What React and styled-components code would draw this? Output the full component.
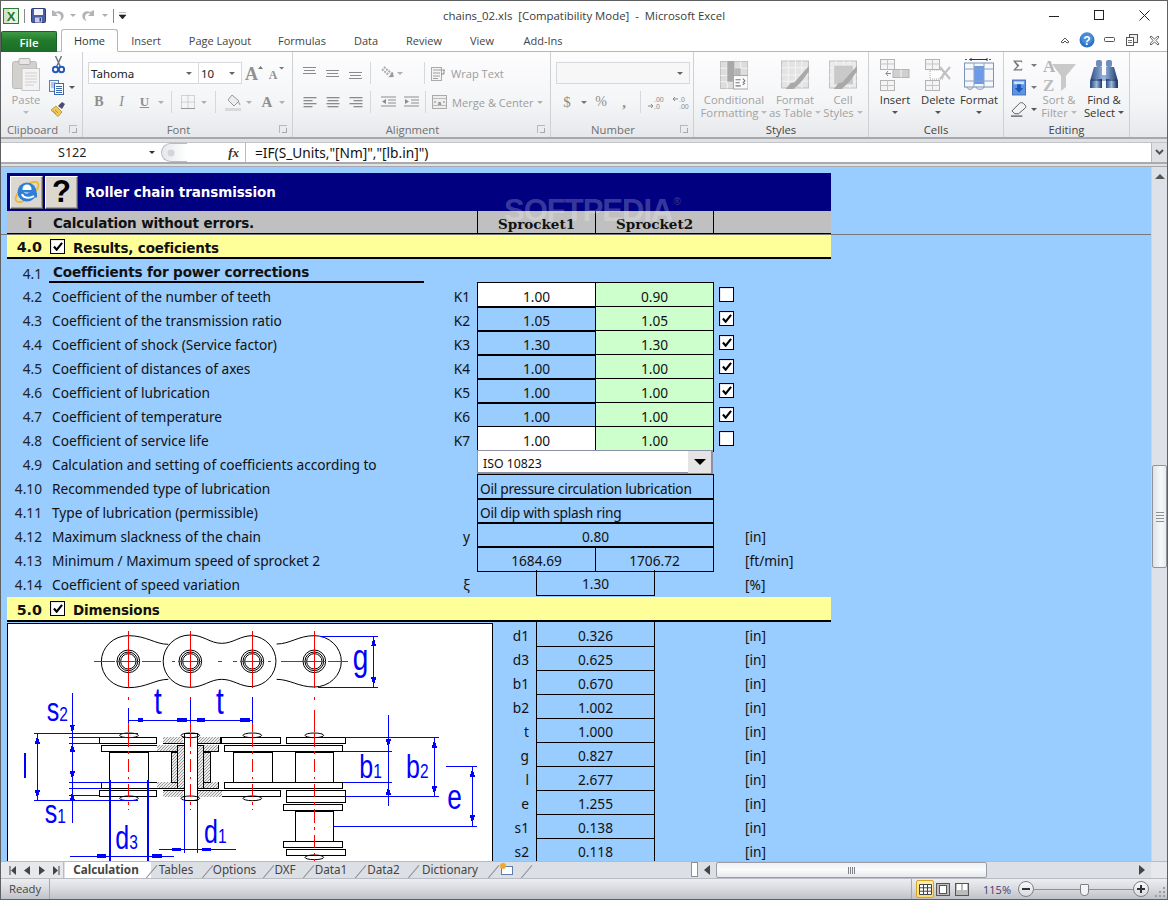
import React from "react";
import styled, { createGlobalStyle } from "styled-components";

const Global = createGlobalStyle`
  html, body { margin: 0; padding: 0; background: #fff; overflow: hidden; }
  * { box-sizing: border-box; }
`;
const UI = `"Open Sans", "Noto Sans", "Liberation Sans", sans-serif`;
const SHEET = `"Noto Sans", "Open Sans", "Liberation Sans", sans-serif`;
const SHEETB = `"DejaVu Sans", "Noto Sans", sans-serif`;

const Win = styled.div`
  width: 1168px; height: 900px; display: flex; flex-direction: column; overflow: hidden;
  border: 1px solid #5f6062; font-family: ${UI}; background: #fff;
`;
/* title bar */
const TitleBar = styled.div`
  height: 28px; display: grid; grid-template-columns: 1fr auto 1fr; align-items: center; background: #fff; flex: none;
`;
const Quick = styled.div`display: flex; align-items: center; padding: 1px 0 0 2px;`;
const QSlot = styled.div`
  width: ${p => p.$w}px; display: flex; justify-content: center; align-items: center; height: 18px;
`;
const QSep = styled.div`width: 1px; height: 14px; background: #8a8a8a; margin: 0 ${p => p.$m || 4}px;`;
const TitleText = styled.div`font-size: 11.4px; color: #3a3a3a; white-space: pre;`;
const Controls = styled.div`display: flex; justify-content: flex-end;`;
const Ctrl = styled.div`width: 45px; height: 22px; display: flex; align-items: center; justify-content: center;`;

/* tab row */
const TabRow = styled.div`
  height: 23px; flex: none; display: flex; align-items: flex-end; position: relative; background: #fff;
  border-bottom: 1px solid #b4b6ba;
`;
const FileTab = styled.div`
  width: 56px; height: 21px; margin-bottom: -1px; border-radius: 2px 2px 0 0; flex: none;
  background: linear-gradient(#3f9a45, #217a2c 45%, #1d6d27); color: #fff; font-size: 11.5px; font-weight: 600;
  display: flex; align-items: center; justify-content: center; border: 1px solid #17622a; border-bottom: 0;
`;
const HomeTab = styled.div`
  width: 57px; height: 23px; margin: 0 0 -1px 4px; background: #fff; flex: none;
  border: 1px solid #b4b6ba; border-bottom: 1px solid #fff; border-radius: 3px 3px 0 0;
  font-size: 11px; color: #333; display: flex; align-items: center; justify-content: center;
`;
const RTab = styled.div`
  font-size: 11px; color: #444; width: ${p => p.$w}px; text-align: center; flex: none; height: 21px; line-height: 21px;
`;
const RibbonRight = styled.div`
  margin-left: auto; display: flex; align-items: center; height: 22px; padding-right: 1px;
`;
const RIcon = styled.div`width: 22.5px; display: flex; justify-content: center; align-items: center;`;

/* ribbon */
const Ribbon = styled.div`
  height: 87px; flex: none; display: flex; background: linear-gradient(#fdfdfe, #f4f5f7 60%, #e6e8eb);
  border-bottom: 2px solid #a6a8ac;
`;
const Group = styled.div`
  width: ${p => p.$w}px; flex: none; display: flex; flex-direction: column; border-right: 1px solid #ced0d4; position: relative;
`;
const GroupBody = styled.div`height: 69px; flex: none; display: flex; padding-left: ${p => p.$pl || 0}px;`;
const ToolRows = styled.div`display: flex; flex-direction: column; gap: 7px; padding-top: 10px;`;
const ToolRow = styled.div`display: flex; align-items: center; height: 22px;`;
const Slot = styled.div`
  width: ${p => p.$w}px; flex: none; display: flex; align-items: center; justify-content: center; height: 22px;
`;
const VSep = styled.div`
  width: 1px; height: 22px; background: #d6d8db; margin: 0 ${p => p.$m ?? 3}px; flex: none;
`;
const Arrow = styled.i`
  width: 0; height: 0; display: inline-block; flex: none; border: 3px solid transparent; border-top: 3px solid ${p => p.$c || "#b0b0b0"}; border-bottom: 0;
`;
const ArrowSlot = styled(Slot)`width: ${p => p.$w || 10}px; margin-left: ${p => p.$ml || 0}px;`;
const GroupLabel = styled.div`
  height: 16px; flex: none; font-size: 11.3px; text-align: center; color: ${p => p.$on ? "#444" : "#6f6f6f"}; line-height: 17px;
  padding-right: ${p => p.$exp ? 18 : 0}px;
`;
const Expander = styled.div`
  position: absolute; right: 5px; bottom: 4px; width: 8px; height: 8px; border: 1px solid #b8b8b8; border-width: 1px 0 0 1px;
  &::after { content: ""; position: absolute; right: 0; bottom: 0; width: 4px; height: 4px; border: 1px solid #a8a8a8; border-width: 0 1px 1px 0; }
`;
const Combo = styled.div`
  width: ${p => p.$w}px; height: 22px; border: 1px solid #d6d8db; background: ${p => p.$blank ? "#f7f7f8" : "#fff"}; flex: none;
  display: flex; align-items: center; justify-content: space-between; font-family: ${SHEET};
  padding: 0 6px 0 2px; font-size: 11.5px; color: #222; margin-left: ${p => p.$ml || 0}px;
`;
const SmallLabel = styled.span`
  font-size: 11.1px; color: #9c9c9c; white-space: nowrap; margin-left: 5px;
`;
const BigBtn = styled.div`
  width: ${p => p.$w}px; flex: none; display: flex; flex-direction: column; align-items: center; padding-top: 4px;
`;
const BigIcon = styled.div`height: 37px; display: flex; align-items: center; justify-content: center;`;
const BigLine = styled.div`
  height: 13px; line-height: 13px; font-size: 11.3px; white-space: nowrap; color: ${p => p.$on ? "#333" : "#a2a2a2"};
  display: flex; align-items: center; gap: 3px;
`;
const SmallCol = styled.div`width: ${p => p.$w}px; flex: none; padding-top: 2px; display: flex; flex-direction: column;`;
const SmallRow = styled.div`
  height: 22px; display: flex; align-items: center; gap: ${p => p.$gap ?? 4}px; padding-left: ${p => p.$pl || 0}px;
`;
const NumGlyph = styled.span`
  font-family: "Liberation Serif", serif; font-size: ${p => p.$s || 13}px; font-weight: ${p => p.$b ? 700 : 400}; font-style: ${p => p.$i ? "italic" : "normal"};
  text-decoration: ${p => p.$u ? "underline" : "none"}; color: #8e8e8e;
`;

/* formula bar */
const FormulaArea = styled.div`
  height: 28px; flex: none; background: #dfe1e5; padding: 3px 0 2px 0; display: flex; border-bottom: 1px solid #a6a8ac;
`;
const FormulaWrap = styled.div`flex: 1; display: flex; height: 22px; background: #fff; border-top: 1px solid #c2c4c8; border-bottom: 2px solid #a8aaae;`;
const NameBox = styled.div`
  width: 160px; flex: none; display: flex; align-items: center; justify-content: space-between; padding: 0 6px 0 57px; font-size: 12.6px; font-family: ${SHEET}; color: #222;
`;
const Oval = styled.div`
  width: 26px; height: 19px; flex: none; border: 1px solid #b8bcc2; border-right: 0; border-radius: 10px 0 0 10px; background: linear-gradient(90deg, #e6e8ec, #fff);
  display: flex; align-items: center; padding-left: 5px;
`;
const Fx = styled.div`
  width: 59px; flex: none; font-family: "Liberation Serif", serif; font-style: italic; font-weight: 700; font-size: 13px; color: #333; display: flex; align-items: center; justify-content: flex-end; padding-right: 6px; border-right: 1px solid #b8bac0;
`;
const FormulaText = styled.div`flex: 1; font-size: 13.7px; font-family: ${SHEET}; padding-left: 9px; display: flex; align-items: center; color: #111;`;
const FormulaDrop = styled.div`
  width: 16px; flex: none; display: flex; align-items: center; justify-content: center; background: #dfe1e5; border-left: 1px solid #b8bac0;
`;

/* sheet */
const SheetArea = styled.div`height: 694px; flex: none; display: flex; background: #99ccff;`;
const Sheet = styled.div`flex: 1; min-width: 0; overflow: hidden; background: #99ccff; font-family: ${SHEET}; font-size: 13.7px; color: #111; position: relative;`;
const Frozen = styled.div`height: 68px; border-bottom: 1px solid #77787a; padding: 6px 0 0 6px;`;
const Block = styled.div`width: 824px; margin-left: 6px;`;
const TitleRow = styled.div`
  height: 38px; background: #000080; width: 824px; display: flex; align-items: center; padding: 0 0 0 3px; gap: 2px; color: #fff;
`;
const Bevel = styled.div`
  width: 33px; height: 33px; background: #dcd8d0; display: flex; align-items: center; justify-content: center;
  border: 1px solid; border-color: #fff #5a5a5a #5a5a5a #fff; box-shadow: inset -1px -1px 0 #a8a49c; font: 700 31px "Liberation Sans", sans-serif; color: #000;
`;
const TitleCaption = styled.div`font: 700 13.5px ${SHEETB}; margin-left: 5px; white-space: nowrap; letter-spacing: -.1px;`;
const HeaderRow = styled.div`
  height: 23px; width: 824px; background: #c0c0c0; border-bottom: 1px solid #000; display: grid; grid-template-columns: 40px 430px 118px 119px 117px; align-items: center;
`;
const HeaderI = styled.div`font: 700 14px ${SHEETB}; text-align: center; padding-left: 6px;`;
const HeaderMsg = styled.div`font: 700 13.55px ${SHEETB}; padding-left: 6px; letter-spacing: -.15px;`;
const HeaderCell = styled.div`
  height: 23px; border-left: 1px solid #000; font: 700 13.5px "DejaVu Serif", serif; text-align: center; line-height: 26px;
  border-right: ${p => p.$last ? "1px solid #000" : 0};
`;
const HeaderEnd = styled.div`height: 23px;`;
const Watermark = styled.div`
  position: absolute; left: 503px; top: 26px; font: 700 31px "Liberation Sans", sans-serif; color: rgba(255,255,255,.24); letter-spacing: -1px; pointer-events: none; white-space: nowrap;
  sup { font-size: 10px; font-weight: 400; vertical-align: 16px; margin-left: 1px; letter-spacing: 0; }
`;
const Section = styled.div`
  height: ${p => p.$h || 24}px; background: #ffff99; border-bottom: 2px solid #000; width: 824px; margin-top: ${p => p.$mt || 0}px; display: flex; align-items: center;
`;
const SecNum = styled.div`width: 35px; text-align: right; font: 700 14.3px ${SHEETB}; padding-top: 2px;`;
const SecTitle = styled.div`font: 700 13.5px ${SHEETB}; margin-left: 8px; letter-spacing: -.15px; padding-top: 3px;`;
const CheckBox = styled.div`
  width: 15px; height: 15px; border: 1px solid #000; background: #fff; flex: none; display: flex; align-items: center; justify-content: center;
  margin-left: ${p => p.$ml || 0}px;
  box-shadow: inset 1px 1px 0 #e8e8e8;
`;
const Row = styled.div`
  height: ${p => p.$h || 24}px; display: grid; grid-template-columns: 40px 377px 53px 118px 119px 31px 86px; width: 824px;
`;
const Num = styled.div`text-align: right; padding: 4px 5px 0 0; line-height: 21px; color: #222;`;
const Label = styled.div`padding: 4px 0 0 5px; line-height: 21px; white-space: nowrap;`;
const BoldLabel = styled.div`
  font: 700 13.6px ${SHEETB}; padding: 3px 0 0 4px; line-height: 20px; border-bottom: 2px solid #000; height: 24px; white-space: nowrap; letter-spacing: -.15px; margin-left: 2px;
`;
const Sym = styled.div`text-align: right; padding: 4px 7px 0 0; line-height: 21px;`;
const Cell = styled.div`
  border: 1px solid #000; background: ${p => p.$bg || "transparent"}; text-align: ${p => p.$left ? "left" : "center"};
  padding: 3px 0 0 ${p => p.$left ? 2 : 0}px; line-height: 21px; margin: 0 ${p => p.$noMr ? 0 : -1}px -1px 0; white-space: nowrap;
  grid-column: ${p => p.$span ? `span ${p.$span}` : "auto"}; letter-spacing: ${p => p.$left ? "-.25px" : "0"};
`;
const SpeedCell = styled(Cell)`
  margin: 0 59px -1px 59px; border-top: 0;
`;
const Mark = styled.div`padding: 5px 0 0 5px;`;
const Unit = styled.div`padding: 4px 0 0 0; line-height: 21px;`;
const IsoSelect = styled.div`
  grid-column: span 2; height: 24px; margin: 0 1px 0 0; background: #fff; border: 1px solid #8d8fa8; border-right: 2px solid #8d8fa8; border-bottom: 2px solid #8d8fa8; display: flex; justify-content: space-between;
  font-size: 12.3px; padding-left: 5px; align-items: center;
`;
const IsoText = styled.span`padding-top: 3px;`;
const IsoBtn = styled.div`
  width: 23px; height: 22px; background: #e4e4e4; display: flex; align-items: center; justify-content: center;
  &::after { content: ""; border: 6px solid transparent; border-top: 6px solid #000; border-bottom: 0; }
`;
const Lower = styled.div`display: flex; width: 824px; align-items: flex-start;`;
const DiagramFrame = styled.div`
  width: 486px; height: 240px; margin-top: 1px; border: 1px solid #000; background: #fff; flex: none; overflow: hidden;
`;
const DimList = styled.div`flex: 1;`;
const DimRow = styled.div`height: 24px; display: grid; grid-template-columns: 36px 7px 119px 90px 60px;`;
const DimSym = styled.div`text-align: right; line-height: 21px; padding-top: 3px;`;
const DimCell = styled.div`
  grid-column: 3; border: 1px solid #000; border-top: ${p => p.$first ? 0 : "1px solid #000"}; margin-bottom: -1px; text-align: center; line-height: 21px; padding-top: ${p => p.$first ? 3 : 2}px;
`;
const DimUnit = styled.div`grid-column: 5; line-height: 21px; padding-top: 3px;`;

/* v scroll */
const VScroll = styled.div`
  width: 16px; flex: none; background: #dee1e8; display: flex; flex-direction: column; align-items: center; position: relative;
  border-left: 1px solid #d0d3da; padding-top: 7px;
`;
const UpArrow = styled.div`border: 5px solid transparent; border-bottom: 5px solid #555; border-top: 0; flex: none;`;
const VThumb = styled.div`
  width: 15px; height: 103px; flex: none; margin-top: 286px; border: 1px solid #92959c; border-radius: 2px; background: linear-gradient(90deg, #dfe2e9, #f7f8fa 60%, #e8eaee);
  display: flex; flex-direction: column; align-items: center; justify-content: center; gap: 2px;
  i { display: block; width: 8px; height: 1px; background: #8d8f95; }
`;

/* bottom tab bar */
const TabBar = styled.div`
  height: 17px; flex: none; display: flex; background: #dcdfe4; border-top: 1px solid #b8bbc1; align-items: stretch; overflow: hidden;
`;
const Nav = styled.div`
  width: 63px; flex: none; display: flex; align-items: center; padding-left: 5px; border-right: 1px solid #b8bbc1; background: #e6e8ec;
`;
const NavBtn = styled.div`width: 14.5px; display: flex; justify-content: center;`;
const Sheets = styled.div`display: flex; flex: none; width: 627px; padding-left: 1px;`;
const SheetTab = styled.div`
  width: ${p => p.$w}px; flex: none; position: relative; font-family: ${SHEET}; font-size: 11.7px; line-height: 15px; color: #444; text-align: center; font-weight: ${p => p.$on ? 700 : 400};
  background: ${p => p.$on ? "#fff" : "transparent"}; padding-right: ${p => p.$pr ?? 6}px;
  &::after { content: ""; position: absolute; right: 0; top: 1px; width: 1px; height: 20px; background: #8e9197; transform: rotate(40deg); }
`;
const Splitter = styled.div`width: 7px; height: 15px; margin: 0; background: #fff; border: 1px solid #8e9197; flex: none;`;
const HS = styled.div`flex: 1; display: flex; align-items: center;`;
const HArrow = styled.div`
  width: 0; height: 0; margin: 0 6px; flex: none; border: 5px solid transparent;
  ${p => p.$right ? "border-left: 6px solid #444; border-right: 0;" : "border-right: 6px solid #444; border-left: 0;"}
`;
const HThumb = styled.div`
  width: 271px; height: 16px; flex: none; border: 1px solid #9a9da4; border-radius: 2px; background: linear-gradient(#eff0f4, #fafbfc 50%, #e5e7eb); display: flex; justify-content: center; align-items: center; gap: 1px;
  i { width: 1px; height: 7px; background: #7e8086; }
`;
const HTrack = styled.div`flex: 1;`;
const Corner = styled.div`width: 16px; flex: none; background: #e6e8ec;`;

/* status */
const Status = styled.div`
  flex: 1; display: flex; align-items: center; background: linear-gradient(#eceef1, #d8dade 50%, #bfc2c7); border-top: 1px solid #b8bbc1; font-size: 11.3px; color: #444;
`;
const Ready = styled.div`width: 49px; padding-left: 8px; height: 100%; line-height: 19px; border-right: 1px solid #a4a6ab; flex: none;`;
const StatusRight = styled.div`margin-left: auto; display: flex; align-items: center; height: 100%;`;
const StatusSep = styled.div`width: 1px; height: 100%; background: #a4a6ab; margin-right: 4px;`;
const ViewBtn = styled.div`
  width: ${p => p.$on ? 18 : 16}px; height: 18px; margin-right: ${p => p.$mr || 0}px; display: flex; align-items: center; justify-content: center;
  ${p => p.$on && "background: linear-gradient(#fff0b0, #ffd96a); border: 1px solid #d9a520; border-radius: 2px;"}
`;
const Zoom = styled.div`width: 30px; text-align: right; margin-left: 11px; color: #4b3b6b; font-size: 11px; margin-right: 7px;`;
const ZoomBtn = styled.div`
  width: 16px; height: 16px; border-radius: 50%; border: 1px solid #7d8086; background: linear-gradient(#fafafa, #d8dadf); position: relative; flex: none;
  &::before { content: ""; position: absolute; left: 3px; right: 3px; top: 6px; height: 2px; background: #333; }
  ${p => p.$plus && `&::after { content: ""; position: absolute; top: 3px; bottom: 3px; left: 6px; width: 2px; background: #333; }`}
`;
const SliderTrack = styled.div`
  width: 101px; height: 1px; background: #8e9197; display: flex; justify-content: center; flex: none; margin: 0 -1px; position: relative;
`;
const SliderThumb = styled.div`
  position: absolute; left: 47px; top: -5px; width: 9px; height: 12px; background: #f2f3f5; border: 1px solid #7d8086; border-radius: 1px 1px 4px 4px;
`;
const Grip = styled.div`
  width: 14px; height: 100%; margin-left: 4px; display: flex; align-items: flex-end; justify-content: center; padding-bottom: 2px;
`;

/* ---- icons ---- */
const ExcelIcon = () => (
  <svg width="16" height="16" viewBox="0 0 16 16"><rect x=".5" y=".5" width="15" height="15" fill="#e8f2e4" stroke="#2f7d32" /><rect x="1" y="1" width="5" height="14" fill="#cfe4c8" /><text x="8" y="12.5" textAnchor="middle" fontFamily="Liberation Sans" fontWeight="700" fontSize="13" fill="#1c7a28">X</text></svg>
);
const SaveIcon = () => (
  <svg width="15" height="15" viewBox="0 0 15 15"><rect x=".5" y=".5" width="14" height="14" rx="1" fill="#4b5fa8" stroke="#2e3c78" /><rect x="3" y="1" width="9" height="6" fill="#f4f6fb" /><rect x="4" y="9.5" width="7" height="5" fill="#c9d0e4" /><rect x="8.5" y="10" width="1.6" height="3.5" fill="#33427f" /></svg>
);
const UndoIcon = ({ flip }) => (
  <svg width="14" height="14" viewBox="0 0 14 14" transform={flip ? "scale(-1 1)" : undefined}><path d="M2 1v6h6L5.6 4.8C8 3.6 11 5 11 8.2c0 1.5-.8 3-2.3 4 3.3-.4 5-2.8 5-5.2 0-3.8-4.4-6-8-4L2 1z" fill="#b2b4b8" /></svg>
);
const Min = () => <svg width="11" height="11"><path d="M0 6.5h10" stroke="#222" /></svg>;
const Max = () => <svg width="11" height="11"><rect x=".5" y=".5" width="9" height="9" fill="none" stroke="#222" /></svg>;
const Close = () => <svg width="11" height="11"><path d="M.5.5l10 10M10.5.5l-10 10" stroke="#222" /></svg>;
const Help = () => (
  <svg width="16" height="16" viewBox="0 0 16 16"><circle cx="8" cy="8" r="7.5" fill="#2f73c9" /><circle cx="8" cy="6" r="6" fill="#5b9be0" opacity=".6" /><text x="8" y="12.5" textAnchor="middle" fontFamily="Liberation Sans" fontWeight="700" fontSize="12" fill="#fff">?</text></svg>
);
const Caret = () => <svg width="10" height="8"><path d="M1 6l4-4 4 4-2 1-2-2-2 2z" fill="none" stroke="#555" /></svg>;
const WinMin = () => <svg width="11" height="6"><rect x=".5" y=".5" width="10" height="4" rx="1" fill="none" stroke="#555" /></svg>;
const WinRestore = () => <svg width="12" height="12"><rect x="3.5" y=".5" width="8" height="8" fill="#eee" stroke="#555" /><rect x=".5" y="3.5" width="7" height="8" fill="#fff" stroke="#555" /><path d="M2 6.5h4M2 8.5h4" stroke="#777" /></svg>;
const WinClose = () => <svg width="11" height="11"><path d="M1 2l1-1 3.500 3 3.500-3 1 1-3 3.500 3 3.500-1 1-3.500-3-3.500 3-1-1 3-3.500z" fill="none" stroke="#666" /></svg>;

const PasteIcon = () => (
  <svg width="28" height="33" viewBox="0 0 28 33"><rect x=".5" y="3.500" width="24" height="27" rx="2" fill="#d3d1ce" stroke="#bdbbb8" /><rect x="7" y=".5" width="11" height="6" rx="1" fill="#e7e6e5" stroke="#b3b1ae" /><rect x="10" y="10.500" width="17.500" height="22" fill="#f3f3f3" stroke="#c5c5c5" /><path d="M13 15h12M13 18h12M13 21h12M13 24h12M13 27h9" stroke="#d0d0d0" /></svg>
);
const CutIcon = () => (
  <svg width="13" height="18" viewBox="0 0 13 18"><path d="M3.500 0l5 11M9.500 0l-5 11" stroke="#6f7682" strokeWidth="1.500" /><circle cx="3.500" cy="13.500" r="2.700" fill="none" stroke="#2859b8" strokeWidth="2" /><circle cx="9.500" cy="13.500" r="2.700" fill="none" stroke="#2859b8" strokeWidth="2" /></svg>
);
const CopyIcon = () => (
  <svg width="15" height="15" viewBox="0 0 15 15"><rect x=".5" y=".5" width="9" height="11" fill="#eaf1fb" stroke="#5c7fb8" /><rect x="5.500" y="3.500" width="9" height="11" fill="#fff" stroke="#3a67ad" /><path d="M7 6.500h6M7 8.500h6M7 10.500h6M7 12.500h6" stroke="#3a67ad" /><path d="M2 3h5M2 5h3M2 7h3" stroke="#7a9bd0" /></svg>
);
const PainterIcon = () => (
  <svg width="16" height="16" viewBox="0 0 16 16"><path d="M1 9l5-4 6 6-4 4.500z" fill="#edc95a" stroke="#a68425" strokeWidth=".7" /><path d="M8 5l4-4 3 2-3 5z" fill="#4d4a73" /><path d="M3 10l3 3M5 9l3 3" stroke="#bb952f" /></svg>
);
const GrowFont = ({ big, up }) => (
  <svg width={big ? 20 : 17} height="22" viewBox="0 0 20 22"><text x="1" y="18" fontFamily="Liberation Serif" fontWeight="700" fontSize={big ? 18 : 14} fill="#909090">A</text><path d={up ? "M14 7l2.500-3 2.500 3z" : "M13 4h6l-3 3z"} fill="#777" /></svg>
);
const BorderIcon = () => (
  <svg width="14" height="14" viewBox="0 0 14 14"><path d="M.5.500h13v13h-13zM7 .5v13M.5 7h13" fill="none" stroke="#b0b0b0" strokeDasharray="1 1" /><path d="M0 13.500h14" stroke="#999" /></svg>
);
const FillIcon = () => (
  <svg width="17" height="17" viewBox="0 0 17 17"><path d="M7 1l7 6-5 5-6-6z" fill="#ededed" stroke="#999" /><path d="M13 7c2 2 3 3 2 4.500-1-1-2-2-2-4.500z" fill="#aaa" /><rect x="0" y="14" width="16" height="3" fill="#d9d9d9" /></svg>
);
const Lines = ({ a }) => {
  const rows = [[0, 13], [2, 11], [0, 13], [2, 11]];
  return (
    <svg width="14" height="13" viewBox="0 0 14 13">{rows.map((r, i) => {
      const w = a === "c" ? r[1] : (i % 2 ? 9 : 13);
      const x = a === "c" ? (14 - w) / 2 : a === "l" ? 0.5 : 13.5 - w;
      return <rect key={i} x={x} y={1 + i * 3} width={w} height="1.300" fill="#8b8b8b" />;
    })}</svg>
  );
};
const VAlign = ({ y }) => (
  <svg width="15" height="13" viewBox="0 0 15 13"><path d={`M1 ${y + .5}h13M2 ${y + 3.5}h11M1 ${y + 6.5}h13`} stroke="#8b8b8b" /></svg>
);
const OrientIcon = () => (
  <svg width="16" height="14" viewBox="0 0 16 14"><g transform="rotate(40 8 7)"><path d="M1 5h10M1 8h8" stroke="#aaa" strokeWidth="2" strokeDasharray="2 1" /><path d="M11 3l4 3.500-4 3.500z" fill="#999" /></g></svg>
);
const IndentIcon = ({ out }) => (
  <svg width="15" height="13" viewBox="0 0 15 13"><path d="M0 1h15M7 4h8M7 7h8M0 10h15" stroke="#8d8d8d" /><path d={out ? "M5 3v5L1 5.500z" : "M1 3v5l4-2.500z"} fill="#8d8d8d" /></svg>
);
const WrapIcon = () => (
  <svg width="15" height="15" viewBox="0 0 15 15"><rect x=".5" y="1.500" width="10" height="13" fill="#f4f4f4" stroke="#aaa" /><path d="M2 4h12M2 7h7M2 10h7M2 12.500h5" stroke="#a0a0a0" /><path d="M13 4v4H10" fill="none" stroke="#888" /></svg>
);
const MergeIcon = () => (
  <svg width="15" height="14" viewBox="0 0 15 14"><rect x=".5" y=".5" width="14" height="13" fill="#eee" stroke="#aaa" /><path d="M1 3.500h13M1 10.500h13" stroke="#bbb" /><text x="7.500" y="9.500" textAnchor="middle" fontSize="6" fontFamily="Liberation Sans" fill="#777" fontWeight="700">a</text><path d="M2 7h2M11 7h2" stroke="#888" /></svg>
);
const DecIcon = ({ more }) => (
  <svg width="18" height="15" viewBox="0 0 18 15"><text x={more ? 6 : 7} y="6.500" fontSize="7" fontFamily="Liberation Sans" fill="#8a8a8a">{more ? ".00" : ".0"}</text><text x={more ? 6 : 7} y="14" fontSize="7" fontFamily="Liberation Sans" fill="#8a8a8a">{more ? ".0" : ".00"}</text><path d={more ? "M0 11h5M3 9l2 2-2 2" : "M6 4H1M3 2L1 4l2 2"} fill="none" stroke="#8a8a8a" /></svg>
);
const TableGrid = ({ children, w = 27, h = 27 }) => (
  <svg width={w} height={h} viewBox="0 0 27 27">{children}</svg>
);
const gridCells = (c = "#ddd", s = "#c2c2c2") => (
  <>
    <rect x=".5" y=".5" width="26" height="26" fill={c} stroke={s} />
    <path d="M7 .5v26M14 .5v26M20 .5v26M.5 7h26M.5 14h26M.5 20h26" stroke="#f4f4f4" />
  </>
);
const CondIcon = () => (
  <TableGrid w={28} h={30}>
    {gridCells()}
    <rect x="7" y="0" width="7" height="20" fill="#a8a8a8" />
    <rect x="14" y="7" width="6" height="7" fill="#b8b8b8" />
    <rect x="13" y="14" width="14" height="13" fill="#fbfbfb" stroke="#aaa" />
    <path d="M15 18h5M15 21h4M15 24h5M22 17l2 2-2 2M22 23l2-2" fill="none" stroke="#777" />
  </TableGrid>
);
const Brush = () => <path d="M27 5L13 21l-4 1-5 6h8l8-8 8-11z" fill="#a9a9a9" />;
const FmtIcon = () => (
  <TableGrid w={28} h={29}>
    {gridCells("#e4e4e4")}
    <Brush />
  </TableGrid>
);
const CellStyleIcon = () => (
  <TableGrid w={28} h={29}>
    {gridCells("#ebebeb")}
    <rect x="5" y="5" width="18" height="18" fill="#c9c9c9" />
    <Brush />
  </TableGrid>
);
const InsertIcon = () => (
  <svg width="30" height="32" viewBox="0 0 30 32"><rect x=".5" y=".5" width="14" height="10" fill="#f4f4f4" stroke="#b3b3b3" /><path d="M.5 5h14M7.500.5v10" stroke="#c5c5c5" /><rect x="13" y="10.500" width="16" height="8" fill="#d0d0d0" stroke="#b3b3b3" /><path d="M21 10.500v8" stroke="#f3f3f3" /><path d="M11 14.500H6M8 12l-2 2.500L8 17" fill="none" stroke="#888" /><rect x=".5" y="21.500" width="14" height="10" fill="#f4f4f4" stroke="#b3b3b3" /><path d="M.5 26.500h14M7.500 21.500v10" stroke="#c5c5c5" /></svg>
);
const DeleteIcon = () => (
  <svg width="26" height="32" viewBox="0 0 26 32"><rect x=".5" y=".5" width="14" height="10" fill="#f4f4f4" stroke="#b3b3b3" /><path d="M.5 5h14M7.500.5v10" stroke="#c5c5c5" /><rect x="5" y="11" width="13" height="9" fill="#fff" stroke="#aaa" strokeDasharray="1 1" /><path d="M15 8l10 12M25 8L15 20" stroke="#c0c0c0" strokeWidth="2" /><rect x=".5" y="21.500" width="14" height="10" fill="#f4f4f4" stroke="#b3b3b3" /><path d="M.5 26.500h14M7.500 21.500v10" stroke="#c5c5c5" /></svg>
);
const FormatIcon = () => (
  <svg width="30" height="33" viewBox="0 0 30 33"><path d="M1 1.500h28" stroke="#555" strokeDasharray="2 2" /><path d="M7 1.500h16M7 0v3M23 0v3" stroke="#333" /><rect x=".5" y="5" width="29" height="24" fill="#f4f7fb" stroke="#7d93b3" /><rect x="10" y="8" width="10" height="18" fill="#6b9aeb" /><path d="M10 5v24M20 5v24M.5 11h29M.5 23h29" stroke="#8ea3c0" /><path d="M3 29c0 3 6 3 6 0M12 29c0 3 8 3 8 0" fill="none" stroke="#7d93b3" /></svg>
);
const SigmaIcon = () => <svg width="13" height="13" viewBox="0 0 13 13"><path d="M1 1h10v3L10 2.500H4L8 6.500 4 10.500h6l1-1.500v3H1l4.500-5z" fill="#777" /></svg>;
const FillDown = () => (
  <svg width="15" height="17" viewBox="0 0 15 17"><rect x=".5" y=".5" width="14" height="16" fill="#5e94e6" stroke="#3f6cb3" /><rect x="2" y="2" width="11" height="3" fill="#cfe0fa" /><path d="M5.500 5h4v4H12L7.500 14 3 9h2.500z" fill="#1b57b8" /></svg>
);
const Eraser = () => (
  <svg width="18" height="16" viewBox="0 0 18 16"><path d="M1 10l8-8c1-1 3-1 4 0l2 2c1 1 1 2 0 3l-7 6H4z" fill="#f4f4f6" stroke="#555" /><path d="M0 15.500h12" stroke="#222" /></svg>
);
const SortIcon = () => (
  <svg width="34" height="37" viewBox="0 0 34 37"><text x="1" y="16" fontFamily="Liberation Serif" fontWeight="700" fontSize="17" fill="#b5b5b5">A</text><text x="1" y="35" fontFamily="Liberation Serif" fontWeight="700" fontSize="17" fill="#bcbcbc">Z</text><path d="M10 8h24L24 20v11l-5 4V20z" fill="#c9c9c9" /></svg>
);
const Binoculars = () => (
  <svg width="28" height="31" viewBox="0 0 28 31"><defs><linearGradient id="bg" x1="0" x2="1"><stop offset="0" stopColor="#2e4f86" /><stop offset=".5" stopColor="#9ab8e0" /><stop offset="1" stopColor="#1f3a68" /></linearGradient></defs><rect x="6" y="1" width="6" height="7" rx="2" fill="#6d8dbc" /><rect x="16" y="1" width="6" height="7" rx="2" fill="#6d8dbc" /><path d="M4 8h8v8h4V8h8l4 14v7H16v-7h-4v7H0v-7z" fill="url(#bg)" /><rect x="1" y="20" width="11" height="9" fill="url(#bg)" /><rect x="16" y="20" width="11" height="9" fill="url(#bg)" /><path d="M1 21h11M16 21h11" stroke="#1b2e52" /></svg>
);

/* IE icon and check */
const IE = () => (
  <svg width="30" height="30" viewBox="0 0 30 30"><ellipse cx="15" cy="15" rx="14" ry="6" transform="rotate(-40 15 15)" fill="none" stroke="#ecb728" strokeWidth="1.800" /><circle cx="15" cy="15" r="9.500" fill="#2f7fd8" /><circle cx="15" cy="12" r="4.500" fill="#fff" /><rect x="9" y="13" width="13" height="2.500" fill="#2f7fd8" /><rect x="16" y="15.500" width="9" height="5" fill="#2f7fd8" /><path d="M10 17c1 4 7 5 12 2" fill="none" stroke="#fff" strokeWidth="2" /></svg>
);
const Tick = () => <svg width="10" height="9" viewBox="0 0 11 10"><path d="M1 5l3 3.500L10 1" fill="none" stroke="#000" strokeWidth="2.400" /></svg>;

/* diagram */
const B = "#0000ff", R = "#ff0000", K = "#000";
const ln = (x1, y1, x2, y2, c = B, w = 3, d) => <line key={`${x1}-${y1}-${x2}-${y2}-${c}`} x1={x1} y1={y1} x2={x2} y2={y2} stroke={c} strokeWidth={w} strokeDasharray={d} />;
const pl = (x, y, w, h, f = "#fff") => <rect key={`p${x}-${y}`} x={x} y={y} width={w} height={h} fill={f} stroke={K} strokeWidth="3" />;
const ah = (x, y, dir) => {
  const s = 8, l = 26;
  const pts = dir === "u" ? `${x},${y} ${x - s},${y + l} ${x + s},${y + l}` : `${x},${y} ${x - s},${y - l} ${x + s},${y - l}`;
  return <polygon key={`a${x}-${y}-${dir}`} points={pts} fill={B} />;
};
const Dtext = ({ x, y, s = 105, sub, children }) => (
  <text transform={`translate(${x} ${y}) scale(.75 1)`} fontFamily="Liberation Sans" fontSize={s} fill={B}>{children}{sub && <tspan fontSize={s * .62}>{sub}</tspan>}</text>
);
const Diagram = () => (
  <svg width="484" height="238" viewBox="24 12 1452 714" shapeRendering="crispEdges">
    <defs>
      <pattern id="hatch" width="9" height="9" patternUnits="userSpaceOnUse"><rect width="9" height="9" fill="#ececec" /><path d="M0 9L9 0" stroke="#999" strokeWidth="2" /></pattern>
    </defs>
    <g fill="none" stroke={K} strokeWidth="3" shapeRendering="auto">
      <path d="M505 73C465 73 440 47 385 47A81 78 0 0 0 385 203C440 203 465 178 505 178" />
      <path d="M830 72C870 72 895 47 943 47A81 77 0 0 1 943 201C895 201 870 178 830 178" />
      <path d="M571 45C610 45 630 70 665 70C700 70 720 47 757 47A80 77 0 0 1 757 200C720 200 700 178 665 178C630 178 610 202 571 202A81 78 0 0 1 571 45Z" fill="#fff" />
      {[385, 571, 757, 943].map(x => <g key={x}><circle cx={x} cy="124" r="34" /><circle cx={x} cy="124" r="28" /><circle cx={x} cy="124" r="23" fill="#fff" /></g>)}
    </g>
    {[385, 571, 757, 943].map(x => <g key={x}>
      {ln(x, 33, x, 205, R)}
      {ln(x - 36, 124, x + 36, 124, R)}
    </g>)}
    {ln(283, 124, 345, 124, R)}{ln(425, 124, 483, 124, R)}{ln(515, 124, 525, 124, R)}{ln(655, 124, 665, 124, R)}{ln(700, 124, 710, 124, R)}{ln(805, 124, 812, 124, R)}{ln(843, 124, 905, 124, R)}{ln(985, 124, 1045, 124, R)}
    {/* top dims */}
    {ln(960, 49, 1133, 49)}{ln(955, 202, 1133, 202)}{ln(1120, 49, 1120, 200)}{ah(1121, 53, "u")}{ah(1121, 198, "d")}
    <Dtext x={1058} y={150} s={112}>g</Dtext>
    <Dtext x={462} y={282} s={112}>t</Dtext>
    <Dtext x={648} y={282} s={112}>t</Dtext>
    {/* plates */}
    {pl(297, 352, 173, 18)}{pl(490, 352, 170, 18, "#fff")}{pl(665, 352, 177, 18)}{pl(860, 352, 175, 18)}
    {pl(305, 376, 350, 18)}{pl(673, 376, 355, 18)}
    {pl(305, 487, 350, 18)}{pl(673, 487, 355, 18)}
    {pl(297, 512, 173, 18)}{pl(490, 512, 175, 18)}{pl(665, 512, 177, 18)}{pl(860, 512, 175, 18)}
    {pl(860, 530, 175, 17)}{pl(850, 553, 178, 18)}{pl(850, 664, 178, 18)}{pl(860, 688, 175, 18)}
    <rect x="470" y="376" width="62" height="18" fill="url(#hatch)" /><rect x="610" y="376" width="45" height="18" fill="url(#hatch)" />
    <rect x="470" y="487" width="62" height="18" fill="url(#hatch)" /><rect x="610" y="487" width="45" height="18" fill="url(#hatch)" />
    <rect x="490" y="352" width="60" height="18" fill="url(#hatch)" /><rect x="595" y="352" width="65" height="18" fill="url(#hatch)" />
    <rect x="490" y="512" width="60" height="18" fill="url(#hatch)" /><rect x="595" y="512" width="70" height="18" fill="url(#hatch)" />
    {pl(328, 396, 118, 90)}{pl(700, 396, 118, 90)}{pl(886, 396, 115, 90)}{pl(886, 573, 115, 90)}
    <rect x="515" y="396" width="18" height="90" fill="url(#hatch)" stroke={K} strokeWidth="3" />
    <rect x="610" y="396" width="20" height="90" fill="url(#hatch)" stroke={K} strokeWidth="3" />
    <rect x="532" y="376" width="21" height="130" fill="url(#hatch)" stroke={K} strokeWidth="3" />
    <rect x="592" y="376" width="19" height="130" fill="url(#hatch)" stroke={K} strokeWidth="3" />
    <rect x="553" y="340" width="39" height="202" fill="#fff" stroke={K} strokeWidth="3" />
    <g fill="none" stroke={K} strokeWidth="3" shapeRendering="auto">
      {[[387, 346], [571, 346], [757, 346], [943, 346], [387, 535], [571, 535], [757, 535], [943, 712]].map(([x, y]) => <ellipse key={`${x}${y}`} cx={x} cy={y} rx="28" ry="7" />)}
    </g>
    {/* centre lines */}
    {[385, 571, 757, 943].map(x => <g key={x}>
      {ln(x, 230, x, 240, R)}
      {ln(x, 270, x, 335, R)}
      {ln(x, 340, x, x === 943 ? 726 : 570, R, 3, "40 14 8 14")}
    </g>)}
    {/* blue dims */}
    {ln(385, 265, 385, 310)}{ln(571, 240, 571, 310)}{ln(757, 230, 757, 310)}{ln(385, 300, 757, 300)}
    {[[415, 430], [530, 560], [590, 615], [720, 750]].map(([a, b]) => <rect key={a} x={a} y="295" width={b - a} height="10" fill={B} />)}
    <Dtext x={140} y={303} s={100} sub="2">s</Dtext>
    <Dtext x={134} y={610} s={100} sub="1">s</Dtext>
    {ln(217, 220, 217, 610)}{ln(103, 340, 415, 340)}{ln(207, 352, 400, 352)}{ln(207, 370, 300, 370)}{ln(207, 487, 440, 487, B, 4)}{ln(207, 505, 305, 505)}{ln(207, 527, 300, 527)}{ln(103, 541, 415, 541)}
    {ah(217, 340, "d")}{ah(217, 370, "u")}{ah(217, 480, "d")}{ah(217, 515, "u")}
    {ln(112, 340, 112, 541)}{ah(112, 345, "u")}{ah(112, 536, "d")}
    <rect x="72" y="398" width="6" height="75" fill={B} />
    {ln(1035, 352, 1316, 352)}{ln(1028, 394, 1175, 394)}{ln(1028, 487, 1175, 487)}{ln(1035, 529, 1316, 529)}
    {ln(1165, 285, 1165, 557)}{ah(1165, 383, "d")}{ah(1165, 498, "u")}
    {ln(1303, 352, 1303, 529)}{ah(1303, 357, "u")}{ah(1303, 524, "d")}
    {ln(1338, 438, 1430, 438)}{ln(1003, 619, 1430, 619)}{ln(1417, 438, 1417, 619)}{ah(1417, 445, "u")}{ah(1417, 612, "d")}
    <Dtext x={1078} y={473} s={100} sub="1">b</Dtext>
    <Dtext x={1218} y={473} s={100} sub="2">b</Dtext>
    <Dtext x={1342} y={567} s={105}>e</Dtext>
    {ln(330, 480, 330, 726, B, 5)}{ln(443, 480, 443, 726, B, 5)}{ln(210, 708, 522, 708)}
    <rect x="290" y="703" width="28" height="10" fill={B} /><rect x="455" y="703" width="30" height="10" fill={B} />
    <Dtext x={346} y={688} s={100} sub="3">d</Dtext>
    {ln(553, 540, 553, 698)}{ln(592, 540, 592, 698)}{ln(477, 688, 707, 688)}
    <rect x="515" y="683" width="28" height="10" fill={B} /><rect x="605" y="683" width="28" height="10" fill={B} />
    <Dtext x={612} y={670} s={100} sub="1">d</Dtext>
  </svg>
);

const coefs = [
  ["4.2", "Coefficient of the number of teeth", "K1", "1.00", "0.90", false, "#fff"],
  ["4.3", "Coefficient of the transmission ratio", "K2", "1.05", "1.05", true],
  ["4.4", "Coefficient of shock (Service factor)", "K3", "1.30", "1.30", true],
  ["4.5", "Coefficient of distances of axes", "K4", "1.00", "1.00", true],
  ["4.6", "Coefficient of lubrication", "K5", "1.00", "1.00", true],
  ["4.7", "Coefficient of temperature", "K6", "1.00", "1.00", true],
  ["4.8", "Coefficient of service life", "K7", "1.00", "1.00", false, "#fff"],
];
const dims = [["d1", "0.326"], ["d3", "0.625"], ["b1", "0.670"], ["b2", "1.002"], ["t", "1.000"], ["g", "0.827"], ["l", "2.677"], ["e", "1.255"], ["s1", "0.138"], ["s2", "0.118"]];
const GREEN = "#ccffcc";

const Big = ({ w, icon, l1, l2, on, arrow }) => (
  <BigBtn $w={w}>
    <BigIcon>{icon}</BigIcon>
    <BigLine $on={on}>{l1}</BigLine>
    <BigLine $on={on}>{l2}{arrow && <Arrow $c={on ? "#555" : "#bbb"} />}</BigLine>
  </BigBtn>
);

const Ribbons = () => (
  <Ribbon>
    <Group $w={82}>
      <GroupBody $pl={2}>
        <Big w={46} icon={<PasteIcon />} l1="Paste" l2="" arrow />
        <SmallCol $w={30}>
          <SmallRow $pl={3}><CutIcon /></SmallRow>
          <SmallRow $pl={0} $gap={5}><CopyIcon /><Arrow $c="#555" /></SmallRow>
          <SmallRow $pl={1}><PainterIcon /></SmallRow>
        </SmallCol>
      </GroupBody>
      <GroupLabel $exp>Clipboard</GroupLabel>
      <Expander />
    </Group>
    <Group $w={210}>
      <GroupBody $pl={5}>
        <ToolRows>
          <ToolRow>
            <Combo $w={111}>Tahoma<Arrow $c="#666" /></Combo>
            <Combo $w={44} $ml={-1}>10<Arrow $c="#666" /></Combo>
            <Slot $w={24}><GrowFont big up /></Slot><Slot $w={20}><GrowFont /></Slot>
          </ToolRow>
          <ToolRow>
            <Slot $w={22}><NumGlyph $b $s={14}>B</NumGlyph></Slot>
            <Slot $w={23}><NumGlyph $i $s={14}>I</NumGlyph></Slot>
            <Slot $w={23}><NumGlyph $u $b $s={13}>U</NumGlyph></Slot>
            <ArrowSlot $w={10}><Arrow /></ArrowSlot>
            <VSep $m={5} />
            <Slot $w={22}><BorderIcon /></Slot>
            <ArrowSlot $w={10}><Arrow /></ArrowSlot>
            <VSep $m={6} />
            <Slot $w={22}><FillIcon /></Slot>
            <ArrowSlot $w={9}><Arrow /></ArrowSlot>
            <Slot $w={28}><NumGlyph $b $s={15}>A</NumGlyph></Slot>
            <ArrowSlot $w={2}><Arrow /></ArrowSlot>
          </ToolRow>
        </ToolRows>
      </GroupBody>
      <GroupLabel $exp>Font</GroupLabel>
      <Expander />
    </Group>
    <Group $w={258}>
      <GroupBody $pl={5}>
        <ToolRows>
          <ToolRow>
            <Slot $w={23}><VAlign y={0} /></Slot><Slot $w={23}><VAlign y={3} /></Slot><Slot $w={23}><VAlign y={5} /></Slot>
            <VSep />
            <Slot $w={28}><OrientIcon /></Slot><ArrowSlot $w={8} $ml={-6}><Arrow /></ArrowSlot>
            <Slot $w={17} />
            <VSep />
            <Slot $w={3} />
            <Slot $w={15}><WrapIcon /></Slot><SmallLabel>Wrap Text</SmallLabel>
          </ToolRow>
          <ToolRow>
            <Slot $w={23}><Lines a="l" /></Slot><Slot $w={23}><Lines a="c" /></Slot><Slot $w={23}><Lines a="r" /></Slot>
            <VSep />
            <Slot $w={28}><IndentIcon out /></Slot><Slot $w={18}><IndentIcon /></Slot><Slot $w={2} />
            <VSep />
            <Slot $w={3} />
            <Slot $w={15}><MergeIcon /></Slot><SmallLabel>Merge &amp; Center</SmallLabel>
            <ArrowSlot $w={12}><Arrow /></ArrowSlot>
          </ToolRow>
        </ToolRows>
      </GroupBody>
      <GroupLabel $exp>Alignment</GroupLabel>
      <Expander />
    </Group>
    <Group $w={143}>
      <GroupBody $pl={5}>
        <ToolRows>
          <ToolRow><Combo $w={134} $blank><span /><Arrow $c="#666" /></Combo></ToolRow>
          <ToolRow>
            <Slot $w={22}><NumGlyph $s={15}>$</NumGlyph></Slot>
            <ArrowSlot $w={12}><Arrow $c="#777" /></ArrowSlot>
            <Slot $w={22}><NumGlyph $s={14}>%</NumGlyph></Slot>
            <Slot $w={24}><NumGlyph $b $s={15}>,</NumGlyph></Slot>
            <VSep $m={4} />
            <Slot $w={24}><DecIcon more /></Slot><Slot $w={24}><DecIcon /></Slot>
          </ToolRow>
        </ToolRows>
      </GroupBody>
      <GroupLabel $exp>Number</GroupLabel>
      <Expander />
    </Group>
    <Group $w={175}>
      <GroupBody $pl={5}>
        <Big w={70} icon={<CondIcon />} l1="Conditional" l2="Formatting" arrow />
        <Big w={52} icon={<FmtIcon />} l1="Format" l2="as Table" arrow />
        <Big w={44} icon={<CellStyleIcon />} l1="Cell" l2="Styles" arrow />
      </GroupBody>
      <GroupLabel $on>Styles</GroupLabel>
    </Group>
    <Group $w={135}>
      <GroupBody $pl={5}>
        <Big w={42} on icon={<InsertIcon />} l1="Insert" l2="" arrow />
        <Big w={44} on icon={<DeleteIcon />} l1="Delete" l2="" arrow />
        <Big w={38} on icon={<FormatIcon />} l1="Format" l2="" arrow />
      </GroupBody>
      <GroupLabel $on>Cells</GroupLabel>
    </Group>
    <Group $w={126}>
      <GroupBody>
        <SmallCol $w={33}>
          <SmallRow $pl={8} $gap={7}><SigmaIcon /><Arrow $c="#777" /></SmallRow>
          <SmallRow $pl={8} $gap={5}><FillDown /><Arrow $c="#777" /></SmallRow>
          <SmallRow $pl={7} $gap={3}><Eraser /><Arrow $c="#555" /></SmallRow>
        </SmallCol>
        <Big w={44} icon={<SortIcon />} l1="Sort &" l2="Filter" arrow />
        <Big w={46} on icon={<Binoculars />} l1="Find &" l2="Select" arrow />
      </GroupBody>
      <GroupLabel $on>Editing</GroupLabel>
    </Group>
  </Ribbon>
);

export default function App() {
  return (
    <>
      <Global />
      <Win>
        <TitleBar>
          <Quick>
            <QSlot $w={16}><ExcelIcon /></QSlot>
            <QSep $m={5} />
            <QSlot $w={16}><SaveIcon /></QSlot>
            <QSlot $w={22}><UndoIcon /></QSlot><QSlot $w={10}><Arrow /></QSlot>
            <QSlot $w={22}><UndoIcon flip /></QSlot><QSlot $w={10}><Arrow /></QSlot>
            <QSep $m={3} />
            <QSlot $w={10}><svg width="7" height="7"><path d="M0 0h7M0 3h7L3.500 7z" stroke="#222" fill="#222" strokeWidth=".6" /></svg></QSlot>
          </Quick>
          <TitleText>chains_02.xls  [Compatibility Mode]  -  Microsoft Excel</TitleText>
          <Controls><Ctrl><Min /></Ctrl><Ctrl><Max /></Ctrl><Ctrl><Close /></Ctrl></Controls>
        </TitleBar>
        <TabRow>
          <FileTab>File</FileTab>
          <HomeTab>Home</HomeTab>
          <RTab $w={56}>Insert</RTab>
          <RTab $w={92}>Page Layout</RTab>
          <RTab $w={72}>Formulas</RTab>
          <RTab $w={56}>Data</RTab>
          <RTab $w={60}>Review</RTab>
          <RTab $w={56}>View</RTab>
          <RTab $w={66}>Add-Ins</RTab>
          <RibbonRight>
            <RIcon><Caret /></RIcon><RIcon><Help /></RIcon><RIcon><WinMin /></RIcon><RIcon><WinRestore /></RIcon><RIcon><WinClose /></RIcon>
          </RibbonRight>
        </TabRow>
        <Ribbons />
        <FormulaArea>
          <FormulaWrap>
            <NameBox>S122<Arrow $c="#333" /></NameBox>
            <Oval><svg width="8" height="8"><circle cx="4" cy="4" r="3.500" fill="#d2d5da" /></svg></Oval>
            <Fx>fx</Fx>
            <FormulaText>=IF(S_Units,"[Nm]","[lb.in]")</FormulaText>
            <FormulaDrop><svg width="9" height="7"><path d="M1 1l3.500 3.500L8 1" fill="none" stroke="#555" strokeWidth="2" /></svg></FormulaDrop>
          </FormulaWrap>
        </FormulaArea>
        <SheetArea>
          <Sheet>
            <Frozen>
              <TitleRow>
                <Bevel><IE /></Bevel>
                <Bevel>?</Bevel>
                <TitleCaption>Roller chain transmission</TitleCaption>
              </TitleRow>
              <HeaderRow>
                <HeaderI>i</HeaderI>
                <HeaderMsg>Calculation without errors.</HeaderMsg>
                <HeaderCell>Sprocket1</HeaderCell>
                <HeaderCell $last>Sprocket2</HeaderCell>
                <HeaderEnd />
              </HeaderRow>
            </Frozen>
            <Watermark>SOFTPEDIA<sup>®</sup></Watermark>
            <Block>
              <Section>
                <SecNum>4.0</SecNum>
                <CheckBox $ml={8}><Tick /></CheckBox>
                <SecTitle>Results, coeficients</SecTitle>
              </Section>
              <Row $h={23}>
                <Num>4.1</Num>
                <BoldLabel>Coefficients for power corrections</BoldLabel>
              </Row>
              {coefs.map(([n, l, k, a, b, c, bg]) => (
                <Row key={n}>
                  <Num>{n}</Num><Label>{l}</Label><Sym>{k}</Sym>
                  <Cell $bg={bg}>{a}</Cell><Cell $bg={GREEN} $noMr>{b}</Cell>
                  <Mark><CheckBox>{c && <Tick />}</CheckBox></Mark>
                </Row>
              ))}
              <Row>
                <Num>4.9</Num><Label>Calculation and setting of coefficients according to</Label><span />
                <IsoSelect><IsoText>ISO 10823</IsoText><IsoBtn /></IsoSelect>
              </Row>
              <Row>
                <Num>4.10</Num><Label>Recommended type of lubrication</Label><span />
                <Cell $span={2} $left $noMr>Oil pressure circulation lubrication</Cell>
              </Row>
              <Row>
                <Num>4.11</Num><Label>Type of lubrication (permissible)</Label><span />
                <Cell $span={2} $left $noMr>Oil dip with splash ring</Cell>
              </Row>
              <Row>
                <Num>4.12</Num><Label>Maximum slackness of the chain</Label><Sym>y</Sym>
                <Cell $span={2} $noMr>0.80</Cell><span /><Unit>[in]</Unit>
              </Row>
              <Row>
                <Num>4.13</Num><Label>Minimum / Maximum speed of sprocket 2</Label><span />
                <Cell>1684.69</Cell><Cell $noMr>1706.72</Cell><span /><Unit>[ft/min]</Unit>
              </Row>
              <Row>
                <Num>4.14</Num><Label>Coefficient of speed variation</Label><Sym>ξ</Sym>
                <SpeedCell $span={2}>1.30</SpeedCell><span /><Unit>[%]</Unit>
              </Row>
              <Section $mt={3} $h={25}>
                <SecNum>5.0</SecNum>
                <CheckBox $ml={8}><Tick /></CheckBox>
                <SecTitle>Dimensions</SecTitle>
              </Section>
              <Lower>
                <DiagramFrame><Diagram /></DiagramFrame>
                <DimList>
                  {dims.map(([s, v], i) => (
                    <DimRow key={s}>
                      <DimSym>{s}</DimSym>
                      <DimCell $first={i === 0}>{v}</DimCell>
                      <DimUnit>[in]</DimUnit>
                    </DimRow>
                  ))}
                </DimList>
              </Lower>
            </Block>
          </Sheet>
          <VScroll>
            <UpArrow />
            <VThumb><i /><i /><i /><i /></VThumb>
          </VScroll>
        </SheetArea>
        <TabBar>
          <Nav>
            <NavBtn><svg width="8" height="9"><path d="M1 0v9" stroke="#444" /><path d="M7 0v9L2 4.500z" fill="#444" /></svg></NavBtn>
            <NavBtn><svg width="6" height="9"><path d="M6 0v9L0 4.500z" fill="#444" /></svg></NavBtn>
            <NavBtn><svg width="6" height="9"><path d="M0 0v9l6-4.500z" fill="#444" /></svg></NavBtn>
            <NavBtn><svg width="8" height="9"><path d="M7 0v9" stroke="#444" /><path d="M1 0v9l5-4.500z" fill="#444" /></svg></NavBtn>
          </Nav>
          <Sheets>
            <SheetTab $on $w={86} $pr={4}>Calculation</SheetTab>
            <SheetTab $w={56}>Tables</SheetTab>
            <SheetTab $w={61}>Options</SheetTab>
            <SheetTab $w={40}>DXF</SheetTab>
            <SheetTab $w={52}>Data1</SheetTab>
            <SheetTab $w={53}>Data2</SheetTab>
            <SheetTab $w={80}>Dictionary</SheetTab>
            <SheetTab $w={33}><svg width="15" height="14" viewBox="0 0 15 14"><rect x="2.500" y="4.500" width="11" height="8" fill="#fff" stroke="#5a7fa8" /><circle cx="4" cy="4" r="3" fill="#f0a830" /></svg></SheetTab>
          </Sheets>
          <Splitter />
          <HS>
            <HArrow />
            <HThumb><i /><i /><i /><i /></HThumb>
            <HTrack />
            <HArrow $right />
          </HS>
          <Corner />
        </TabBar>
        <Status>
          <Ready>Ready</Ready>
          <StatusRight>
            <StatusSep />
            <ViewBtn $on $mr={1}><svg width="13" height="11"><path d="M.5.500h12v10H.5zM.5 3.800h12M.5 7.200h12M4.500.5v10M8.500.5v10" fill="#fff" stroke="#444" /></svg></ViewBtn>
            <ViewBtn $mr={3}><svg width="14" height="13"><rect x=".5" y=".5" width="13" height="12" fill="#bbb" stroke="#555" /><rect x="3.500" y="2.500" width="7" height="8" fill="#fff" stroke="#555" /></svg></ViewBtn>
            <ViewBtn><svg width="14" height="13"><rect x=".5" y=".5" width="13" height="12" fill="#bbb" stroke="#555" /><rect x="2" y="1" width="4" height="6" fill="#fff" /><rect x="8" y="1" width="4" height="6" fill="#fff" /></svg></ViewBtn>
            <Zoom>115%</Zoom>
            <ZoomBtn />
            <SliderTrack><SliderThumb /></SliderTrack>
            <ZoomBtn $plus />
            <Grip><svg width="10" height="10"><path d="M8 0h2v2H8zM4 4h2v2H4zM8 4h2v2H8zM0 8h2v2H0zM4 8h2v2H4zM8 8h2v2H8z" fill="#9a9da2" /></svg></Grip>
          </StatusRight>
        </Status>
      </Win>
    </>
  );
}
